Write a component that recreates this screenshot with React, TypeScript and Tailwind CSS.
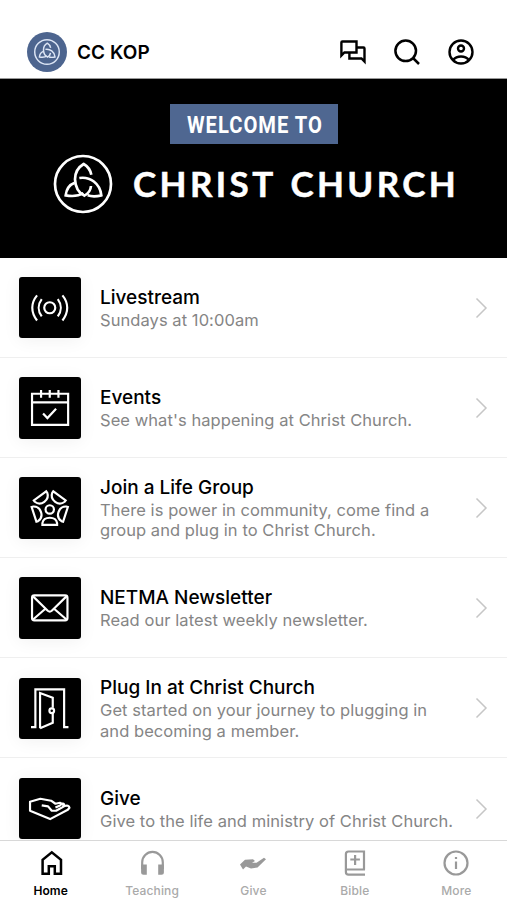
import type { ReactNode } from "react";

function Trefoil() {
  return (
    <>
      <circle cx="129" cy="282" r="84" />
      <path d="M154 254C151 240 143 229 131 222C116 231 105 247 105 268C106 292 117 309 133 317C146 310 152 300 153 288" />
      <path d="M104 278C88 284 79 298 77 316C97 320 116 318 130 309" />
      <path d="M118 264C150 259 180 280 184 316C168 320 155 320 143 316" />
    </>
  );
}

function Livestream() {
  return (
    <>
      <circle cx="149" cy="142" r="16.500" />
      <path d="M111 105C92 128 92 156 111 180M187 105C206 128 206 156 187 180M125 116C113 132 113 152 125 168M173 116C185 132 185 152 173 168" />
    </>
  );
}

function Events() {
  return (
    <>
      <path d="M96 101H204V194H96ZM96 127H204M123 90V113M149 90V113M175 90V113M129 160L142 174L168 146" />
    </>
  );
}

function Group() {
  return (
    <>
      <circle cx="149" cy="148" r="12.500" />
      <path d="M127 194V189C129 178 138 173 149 173S169 178 171 189V194Z" />
      {[72, 144, 216, 288].map((a) => (
        <path
          key={a}
          transform={`rotate(${a} 149 147.5)`}
          d="M126 197V192C129 181 138 175 149 175S169 181 172 192V197Z"
        />
      ))}
    </>
  );
}

function Mail() {
  return (
    <>
      <rect x="96" y="107" width="106" height="75" rx="7" />
      <path d="M99 110L143 153Q149 158 155 153L199 110M99 179L136 147M199 179L162 147" />
    </>
  );
}

function Door() {
  return (
    <>
      <path d="M93 200H106V87H192V200H205M120 203V98L158 112V142M158 158V187L120 203" />
      <circle cx="155" cy="151" r="7" />
    </>
  );
}

function Hand() {
  return (
    <path
      strokeLinejoin="round"
      d="M125 135L144 138L155 151H168L193 137Q206 133 208 142L203 148L150 176L90 151V124L121 115L153 121L166 130L180 127Q187 129 180 135L166 141M181 134Q188 126 192 132L188 139"
    />
  );
}

const rows: { title: string; lines: string[]; icon: ReactNode; box: string }[] = [
  { title: "Livestream", lines: ["Sundays at 10:00am"], icon: <Livestream />, box: "57 50 184 184" },
  { title: "Events", lines: ["See what's happening at Christ Church."], icon: <Events />, box: "57 51 184 184" },
  { title: "Join a Life Group", lines: ["There is power in community, come find a", "group and plug in to Christ Church."], icon: <Group />, box: "57 51 184 184" },
  { title: "NETMA Newsletter", lines: ["Read our latest weekly newsletter."], icon: <Mail />, box: "57 52 184 184" },
  { title: "Plug In at Christ Church", lines: ["Get started on your journey to plugging in", "and becoming a member."], icon: <Door />, box: "57 53 184 184" },
  { title: "Give", lines: ["Give to the life and ministry of Christ Church."], icon: <Hand />, box: "57 53 184 184" },
];

const tabs: { label: string; icon: ReactNode }[] = [
  { label: "Home", icon: <path strokeWidth="2.500" d="M5.600 24.800V10.800L14.800 3.400L24 10.800V24.800H17.800V17.300H11.800V24.800Z" /> },
  {
    label: "Teaching",
    icon: (
      <>
        <path d="M4.200 20V13.200a10.300 10.300 0 0 1 20.600 0V20" />
        <path fill="currentColor" stroke="none" d="M3.100 15.500H8.800V25.800H5.600Q3.100 25.800 3.100 23.300ZM20.200 15.500H25.900V23.300Q25.900 25.800 23.400 25.800H20.200Z" />
      </>
    ),
  },
  {
    label: "Give",
    icon: <path fill="currentColor" stroke="none" d="M1 15.500L6 10.800L14 10.300L16 12L13 13.800L17.500 13.800L25 8.700L27 10.200L18.500 18.500L12 19.500L7 17.500L4 20.500Z" />,
  },
  {
    label: "Bible",
    icon: <path d="M23 20.500V2.500H7.500Q4.900 2.500 4.900 5.100V23Q4.900 25.700 7.500 25.700H24M5 20.500H24M14.100 6V16M9.300 10.500H18.900" />,
  },
  {
    label: "More",
    icon: (
      <>
        <circle cx="14" cy="14" r="11.500" />
        <path d="M14 12.500V20M14 8V10" />
      </>
    ),
  },
];

export default function App() {
  return (
    <div className="flex h-screen w-full flex-col overflow-hidden bg-white font-['Inter','Liberation_Sans',sans-serif] text-black">
      <header className="flex h-[79px] shrink-0 items-end border-b border-[#999] pr-[32px] pb-[6px] pl-[27px]">
        <div className="flex h-10 w-10 items-center justify-center rounded-full bg-[#4d658f]">
          <svg className="h-[26px] w-[26px]" viewBox="40 193 178 178" fill="none" stroke="#dce5f5" strokeWidth="10">
            <Trefoil />
          </svg>
        </div>
        <h1 className="ml-[10px] flex h-10 items-center pt-[2px] text-[19px] font-semibold tracking-[0.1px]">CC KOP</h1>
        <div className="ml-auto flex h-10 items-center gap-[26px]">
          <svg className="h-7 w-7" viewBox="0 0 28 28" fill="none" stroke="black" strokeWidth="2.400">
            <path d="M2.400 17.500V4.500Q2.400 3.500 3.400 3.500H17.500V14.500H5.400ZM17.500 9.500H24.500Q25.500 9.500 25.500 10.500V23.500L22.500 20.500H10.400V14.500" />
          </svg>
          <svg className="h-7 w-7" viewBox="0 0 28 28" fill="none" stroke="black" strokeWidth="2.500">
            <circle cx="12.700" cy="12.800" r="10.300" />
            <path d="M20 20L26 26" />
          </svg>
          <svg className="h-7 w-7" viewBox="0 0 28 28" fill="none" stroke="black" strokeWidth="2.400">
            <circle cx="14" cy="14" r="11.500" />
            <circle cx="14" cy="10.500" r="3" />
            <path d="M6 22Q9 18.500 14 18.500T22 22" />
          </svg>
        </div>
      </header>

      <section className="flex h-[178.500px] shrink-0 flex-col items-center bg-black pt-[25px] text-white">
        <div className="flex h-10 w-[168px] shrink-0 items-center justify-center bg-[#4f6791] pt-px pl-[3px]">
          <span className="scale-x-[0.84] font-['Roboto',sans-serif] text-[24px] font-bold tracking-[1.200px] whitespace-nowrap">WELCOME TO</span>
        </div>
        <div className="mt-[10px] flex h-[60px] w-full shrink-0 items-center pl-[53px]">
          <svg className="h-[60px] w-[60px] shrink-0" viewBox="39 192 180 180" fill="none" stroke="white" strokeWidth="8">
            <Trefoil />
          </svg>
          <span className="ml-5 pb-[2px] font-['Lato',sans-serif] text-[35px] font-bold tracking-[3.400px] [word-spacing:3px] whitespace-nowrap [-webkit-text-stroke:0.5px_white]">CHRIST CHURCH</span>
        </div>
      </section>

      <main className="min-h-0 flex-1 overflow-hidden">
        {rows.map((r) => (
          <div key={r.title} className="flex h-[100.200px] items-center border-b border-[#efefef] pt-px pr-[19px] pl-[19px]">
            <div className="h-[61.500px] w-[61.500px] shrink-0 rounded-[3px] bg-black shadow-[0_2px_18px_rgba(0,0,0,0.06)]">
              <svg className="h-full w-full" viewBox={r.box} fill="none" stroke="white" strokeWidth="6.500">
                {r.icon}
              </svg>
            </div>
            <div className="ml-[19.500px] flex-1 whitespace-nowrap">
              <h2 className="text-[19px] leading-[25px] font-medium">{r.title}</h2>
              {r.lines.map((l) => (
                <p key={l} className="text-[16.500px] leading-[20.500px] tracking-[0.065px] text-[#858585]">{l}</p>
              ))}
            </div>
            <svg className="h-[22px] w-[13px] shrink-0" viewBox="0 0 13 22" fill="none" stroke="#c6c6c6" strokeWidth="1.500">
              <path d="M1.500 1.500L11 11L1.500 20.500" />
            </svg>
          </div>
        ))}
      </main>

      <nav className="grid h-[60px] shrink-0 grid-cols-5 border-t border-[#d8d8d8] bg-white">
        {tabs.map((t, i) => (
          <div key={t.label} className={i === 0 ? "flex flex-col items-center pt-[8px] text-black" : "flex flex-col items-center pt-[8px] text-[#999]"}>
            <svg className="h-7 w-7" viewBox="0 0 28 28" fill="none" stroke="currentColor" strokeWidth="2.200">
              {t.icon}
            </svg>
            <span className={i === 0 ? "mt-[6px] text-[12px] leading-4 font-semibold tracking-[0.1px]" : "mt-[6px] text-[12px] leading-4 font-medium tracking-[0.15px] text-[#aaa]"}>{t.label}</span>
          </div>
        ))}
      </nav>
    </div>
  );
}
